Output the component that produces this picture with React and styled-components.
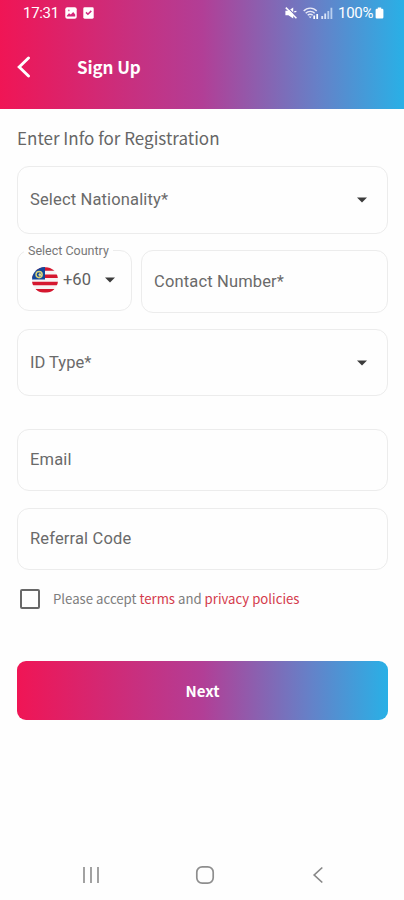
import React, { useState } from 'react';
import styled, { createGlobalStyle } from 'styled-components';

function StatusBar() {
    return (
        <Status>
            <Time>17:31</Time>
            <svg width="12" height="12" viewBox="0 0 12 12">
                <rect x="0.3" y="0.3" width="11.4" height="11.4" rx="2" fill="#fff" />
                <path d="M1.8 8.8 L4 6.2 L5.8 7.6 L8.2 5 L10.2 7.4 V9.4 H1.8Z" fill="#d5277a" />
                <circle cx="3.8" cy="3.4" r="0.9" fill="#e56fa5" />
            </svg>
            <CheckIcon width="11" height="12" viewBox="0 0 11 12">
                <rect x="0.3" y="0.3" width="10.4" height="11.4" rx="1.4" fill="#fff" />
                <path d="M3 5.4 L4.9 7.3 L8.3 3.9" stroke="#d02a80" strokeWidth="1.5" fill="none" />
            </CheckIcon>
            <Indicators>
                <svg width="12" height="12" viewBox="0 0 12 12">
                    <path d="M0.4 3.8 H3.4 L8.2 0.6 V11.4 L3.4 8.2 H0.4Z" fill="#fff" />
                    <path d="M1.8 -0.2 L12 10" stroke="#7b74bd" strokeWidth="1.2" />
                    <path d="M0.8 0.6 L11.4 11.2" stroke="#fff" strokeWidth="1.5" />
                    <path d="M9.2 4.8 L11.4 4.4" stroke="#fff" strokeWidth="1.2" />
                </svg>
                <WifiIcon width="17" height="13" viewBox="0 0 17 13">
                    <g fill="none" stroke="#e8e9f7" strokeWidth="1.4">
                        <path d="M0.7 4 C4.2 0.2 10.2 0.2 13.7 4" />
                        <path d="M2.7 6.2 C5 3.8 9.4 3.8 11.7 6.2" />
                        <path d="M4.7 8.3 C6 6.9 8.4 6.9 9.7 8.3" />
                    </g>
                    <path d="M5.7 9.4 H8.7 L7.2 11.2Z" fill="#e8e9f7" />
                    <path d="M11.2 12 V8.4 M14.2 7 V12" stroke="#fff" strokeWidth="1.7" />
                </WifiIcon>
                <SignalIcon width="12" height="12" viewBox="0 0 12 12">
                    <path d="M1.2 9 V12 M4.2 6.5 V12" stroke="#dce5f7" strokeWidth="1.8" />
                    <path d="M7.3 4 V12 M10.4 0.8 V12" stroke="#b9cfef" strokeWidth="1.8" />
                </SignalIcon>
                <Percent>100%</Percent>
                <svg width="9" height="12" viewBox="0 0 9 12">
                    <path d="M2.8 0.4 H6.2 V1.8 H7.2 Q8.4 1.8 8.4 3 V10.2 Q8.4 11.6 7.2 11.6 H1.8 Q0.6 11.6 0.6 10.2 V3 Q0.6 1.8 1.8 1.8 H2.8Z" fill="#fff" />
                </svg>
            </Indicators>
        </Status>
    )
}

function Flag() {
    return (
        <svg width="26" height="26" viewBox="0 0 26 26">
            <defs>
                <clipPath id="round"><circle cx="13" cy="13" r="13" /></clipPath>
            </defs>
            <g clipPath="url(#round)">
                <rect width="26" height="26" fill="#f7f3f4" />
                <path d="M0 2H26M0 9.2H26M0 16.5H26M0 23.8H26" stroke="#d5172f" strokeWidth="3.6" />
                <rect width="13" height="12.5" fill="#12489b" />
                <circle cx="7.1" cy="7.6" r="3.1" fill="none" stroke="#dcd477" strokeWidth="1.4" />
                <path d="M7.8 5.3 L8.5 6.8 L10 6.4 L9.2 7.7 L10.2 9 L8.4 8.8 L7.7 10.2 L7.2 8.5 L5.8 8 L7.2 7.1Z" fill="#e7dd89" />
            </g>
        </svg>
    )
}

function Arrow() {
    return (
        <svg width="10" height="6" viewBox="0 0 10 6">
            <path d="M0 0.4 H10 L5 5.6Z" fill="#3c3c3c" />
        </svg>
    )
}

function App() {
    const [accepted, setAccepted] = useState(false);
    return (
        <Screen>
            <GlobalStyle />
            <Header>
                <StatusBar />
                <TitleRow>
                    <BackButton aria-label="Back">
                        <svg width="14" height="22" viewBox="0 0 14 22">
                            <path d="M11.5 2 L2.2 11 L11.5 20" fill="none" stroke="#fff" strokeWidth="2.9" strokeLinecap="round" />
                        </svg>
                    </BackButton>
                    <Title>Sign Up</Title>
                </TitleRow>
            </Header>
            <Form>
                <Intro>Enter Info for Registration</Intro>
                <Field $height={68}>
                    <Label>Select Nationality*</Label>
                    <Arrow />
                </Field>
                <PhoneRow>
                    <CountryField>
                        <Legend>Select Country</Legend>
                        <Flag />
                        <DialCode>+60</DialCode>
                        <Arrow />
                    </CountryField>
                    <ContactField $height={63}>
                        <Label>Contact Number*</Label>
                    </ContactField>
                </PhoneRow>
                <Field $height={67} $top={16}>
                    <Label $spacing="0">ID Type*</Label>
                    <Arrow />
                </Field>
                <Field $height={62} $top={33}>
                    <Label>Email</Label>
                </Field>
                <Field $height={62} $top={17}>
                    <Label>Referral Code</Label>
                </Field>
                <Terms>
                    <Checkbox role="checkbox" aria-checked={accepted} onClick={() => setAccepted(!accepted)}>
                        {accepted && '✓'}
                    </Checkbox>
                    <TermsText>
                        Please accept <Link>terms</Link> and <Link>privacy policies</Link>
                    </TermsText>
                </Terms>
                <NextButton>Next</NextButton>
            </Form>
            <NavBar>
                <svg width="18" height="18" viewBox="0 0 18 18">
                    <path d="M2 1V17M9 1V17M16 1V17" stroke="#929292" strokeWidth="1.7" />
                </svg>
                <HomeIcon width="20" height="20" viewBox="0 0 20 20">
                    <rect x="1.8" y="1.8" width="16.4" height="16.4" rx="5.4" fill="none" stroke="#8e8e8e" strokeWidth="1.7" />
                </HomeIcon>
                <svg width="12" height="18" viewBox="0 0 12 18">
                    <path d="M10.3 1.5 L2.2 9 L10.3 16.5" fill="none" stroke="#888" strokeWidth="1.7" />
                </svg>
            </NavBar>
        </Screen>
    )
}

const GlobalStyle = createGlobalStyle`
    * {
        box-sizing: border-box;
    }
    body {
        margin: 0;
        background: #fefefe;
    }
    svg {
        display: block;
        flex-shrink: 0;
    }
`

const gradient = 'linear-gradient(90deg, #f01555 0%, #b23e96 50%, #6581c8 79%, #29b0e6 100%)';
const sourceFont = '"Noto Sans CJK SC", "Noto Sans", sans-serif';

const Screen = styled.div`
    display: flex;
    flex-direction: column;
    width: 404px;
    height: 900px;
    background: #fefefe;
    font-family: Roboto, sans-serif;
    overflow: hidden;
`

const Header = styled.header`
    height: 109px;
    background: ${gradient};
    color: white;
`

const Status = styled.div`
    display: flex;
    align-items: center;
    height: 26px;
    padding: 0 20px 0 23px;
`

const Time = styled.span`
    width: 42px;
    font-size: 15px;
    line-height: 18px;
    letter-spacing: -0.3px;
`

const CheckIcon = styled.svg`
    margin-left: 6px;
`

const Indicators = styled.div`
    display: flex;
    align-items: center;
    margin-left: auto;
`

const WifiIcon = styled.svg`
    margin-left: 6px;
`

const SignalIcon = styled.svg`
    margin-left: 1px;
`

const Percent = styled.span`
    width: 37px;
    margin-left: 5px;
    font-size: 15px;
    line-height: 18px;
    letter-spacing: -0.3px;
`

const TitleRow = styled.div`
    display: flex;
    align-items: center;
    height: 82px;
    padding: 0 17px;
`

const BackButton = styled.button`
    width: 60px;
    padding: 0;
    border: 0;
    background: none;
    cursor: pointer;
`

const Title = styled.h1`
    margin: 0;
    font-family: ${sourceFont};
    font-size: 17px;
    font-weight: 700;
    line-height: 26px;
    letter-spacing: -0.1px;
`

const Form = styled.main`
    flex: 1;
    padding: 17px 16px 0 17px;
`

const Intro = styled.p`
    height: 24px;
    margin: 0 0 16px;
    font-family: ${sourceFont};
    font-size: 17px;
    line-height: 24px;
    color: #666;
    white-space: nowrap;
`

const Field = styled.div`
    display: flex;
    justify-content: space-between;
    align-items: center;
    height: ${({ $height }) => $height}px;
    margin-top: ${({ $top }) => $top || 0}px;
    padding: 0 20px 0 12px;
    border: 1.5px solid #ececec;
    border-radius: 12px;
`

const Label = styled.span`
    font-size: 16.5px;
    line-height: 20px;
    letter-spacing: ${({ $spacing }) => $spacing || '0.15px'};
    color: #6a6a6a;
    white-space: nowrap;
`

const PhoneRow = styled.div`
    display: flex;
    align-items: flex-start;
    gap: 9px;
    margin-top: 16px;
`

const CountryField = styled.div`
    position: relative;
    display: flex;
    align-items: center;
    width: 115px;
    height: 61px;
    padding: 0 0 1px 14px;
    border: 1.5px solid #ececec;
    border-radius: 12px;
`

const ContactField = styled(Field)`
    flex: 1;
`

// sits over the top border of the outlined field
const Legend = styled.span`
    position: absolute;
    top: -8px;
    left: 6px;
    padding: 0 4px;
    font-size: 12.5px;
    line-height: 16px;
    color: #777;
    background: #fefefe;
    white-space: nowrap;
`

const DialCode = styled.span`
    width: 42px;
    margin-left: 5px;
    font-size: 16.5px;
    line-height: 20px;
    color: #606060;
`

const Terms = styled.div`
    display: flex;
    align-items: center;
    height: 20px;
    margin: 19px 0 52px 3px;
`

const Checkbox = styled.div`
    width: 20px;
    height: 20px;
    border: 2px solid #686868;
    border-radius: 2px;
    font-size: 14px;
    line-height: 16px;
    text-align: center;
    cursor: pointer;
`

const TermsText = styled.span`
    margin-left: 13px;
    font-family: ${sourceFont};
    font-size: 13.2px;
    line-height: 20px;
    color: #7d7d7d;
    white-space: nowrap;
`

const Link = styled.a`
    color: #d43b4c;
    cursor: pointer;
`

const NextButton = styled.button`
    display: block;
    width: 100%;
    height: 59px;
    padding: 0;
    border: 0;
    border-radius: 9px;
    font-family: ${sourceFont};
    font-size: 15px;
    font-weight: 700;
    color: white;
    background: ${gradient};
    cursor: pointer;
`

const NavBar = styled.nav`
    display: flex;
    justify-content: space-between;
    align-items: center;
    height: 50px;
    padding: 0 80px 0 82px;
`

const HomeIcon = styled.svg`
    margin-right: 3px;
`

export default App
